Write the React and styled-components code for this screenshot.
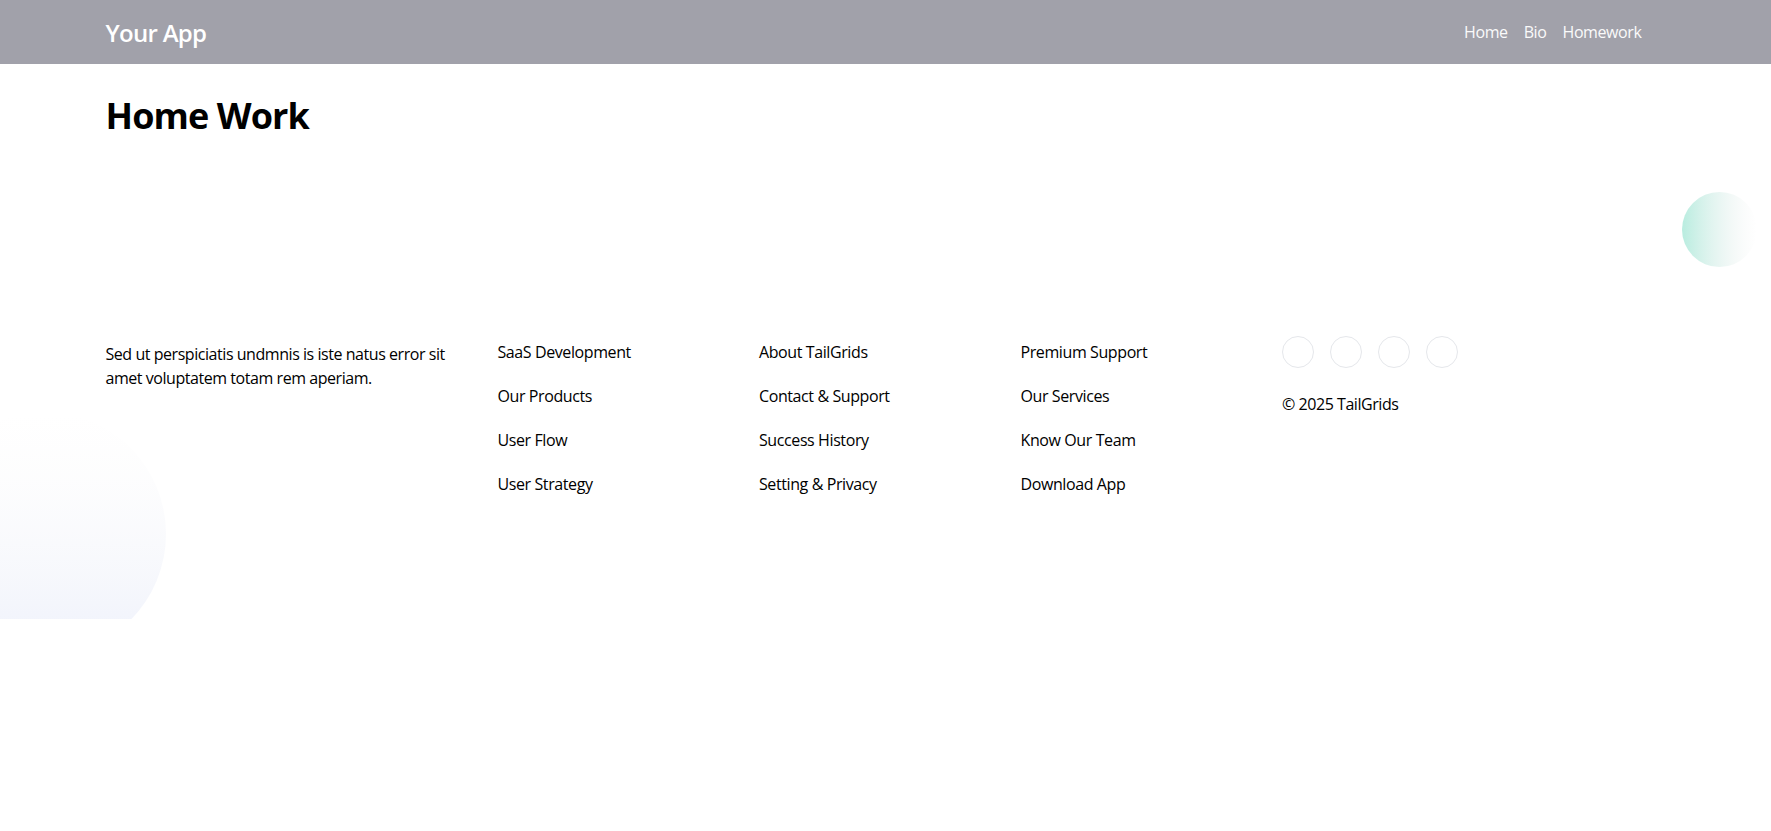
import React from "react";
import styled, { createGlobalStyle } from "styled-components";

const Global = createGlobalStyle`
  html, body { margin: 0; padding: 0; background: #ffffff; }
  body {
    font-family: "Open Sans", "Noto Sans", Arial, sans-serif;
    color: #000;
    font-size: 16px;
    line-height: 24px;
  }
  * { box-sizing: border-box; }
`;

const Header = styled.header`
  background: #a1a1aa;
  height: 64px;
`;

const HeaderInner = styled.div`
  width: 1560px;
  margin: 0 auto;
  height: 100%;
  display: flex;
  align-items: center;
  justify-content: space-between;
  padding-right: 24px;
`;

const Brand = styled.a`
  color: #fff;
  font-size: 24px;
  line-height: 32px;
  font-weight: 600;
  letter-spacing: -0.7px;
  text-decoration: none;
  margin-top: 2px;
`;

const Nav = styled.nav`
  display: flex;
  gap: 16px;
`;

const NavLink = styled.a`
  color: #fafafa;
  font-size: 16px;
  line-height: 24px;
  letter-spacing: -0.4px;
  text-decoration: none;
`;

const Main = styled.main`
  width: 1560px;
  margin: 0 auto;
  padding-top: 32px;
`;

const Title = styled.h1`
  margin: 0;
  font-size: 36px;
  line-height: 40px;
  font-weight: 700;
  letter-spacing: -0.9px;
`;

const Footer = styled.footer`
  position: relative;
  padding: 200px 0 123px;
`;

const Container = styled.div`
  width: 1560px;
  margin: 0 auto;
  display: grid;
  grid-template-columns: 392px 261.5px 261.5px 261.5px 1fr;
  align-items: start;
  position: relative;
  z-index: 1;
`;

const Desc = styled.p`
  margin: 6px 0 0;
  max-width: 360px;
  font-size: 16px;
  line-height: 24px;
  letter-spacing: -0.45px;
`;

const LinkList = styled.ul`
  list-style: none;
  margin: 4px 0 0;
  padding: 0;
  display: flex;
  flex-direction: column;
  gap: 20px;
`;

const FooterLink = styled.a`
  color: #000;
  text-decoration: none;
  font-size: 16px;
  line-height: 24px;
  letter-spacing: -0.4px;
`;

const Socials = styled.div`
  display: flex;
  gap: 16px;
  margin-bottom: 24px;
`;

const SocialCircle = styled.a`
  width: 32px;
  height: 32px;
  border-radius: 50%;
  border: 1px solid #e5e7eb;
  display: block;
`;

const Copy = styled.p`
  margin: 0;
  font-size: 16px;
  line-height: 24px;
  letter-spacing: -0.45px;
`;

const Deco = styled.span`
  position: absolute;
  pointer-events: none;
  z-index: 0;
  line-height: 0;
  ${(p) => p.$pos}
`;

const columns = [
  ["SaaS Development", "Our Products", "User Flow", "User Strategy"],
  ["About TailGrids", "Contact & Support", "Success History", "Setting & Privacy"],
  ["Premium Support", "Our Services", "Know Our Team", "Download App"],
];

export default function App() {
  return (
    <>
      <Global />
      <Header>
        <HeaderInner>
          <Brand href="#">Your App</Brand>
          <Nav>
            <NavLink href="#">Home</NavLink>
            <NavLink href="#">Bio</NavLink>
            <NavLink href="#">Homework</NavLink>
          </Nav>
        </HeaderInner>
      </Header>
      <Main>
        <Title>Home Work</Title>
      </Main>
      <Footer>
        <Container>
          <Desc>
            Sed ut perspiciatis undmnis is iste natus error sit amet voluptatem
            totam rem aperiam.
          </Desc>
          {columns.map((col, i) => (
            <LinkList key={i}>
              {col.map((t) => (
                <li key={t}>
                  <FooterLink href="#">{t}</FooterLink>
                </li>
              ))}
            </LinkList>
          ))}
          <div>
            <Socials>
              <SocialCircle href="#" />
              <SocialCircle href="#" />
              <SocialCircle href="#" />
              <SocialCircle href="#" />
            </Socials>
            <Copy>© 2025 TailGrids</Copy>
          </div>
        </Container>
        <Deco $pos="right: 14px; top: 56px;">
          <svg width="75" height="75" viewBox="0 0 75 75">
            <defs>
              <linearGradient id="tealGrad" x1="0" y1="37.5" x2="75" y2="37.5" gradientUnits="userSpaceOnUse">
                <stop offset="0" stopColor="#13C296" stopOpacity="0.3" />
                <stop offset="1" stopColor="#C4C4C4" stopOpacity="0" />
              </linearGradient>
            </defs>
            <circle cx="37.5" cy="37.5" r="37.5" fill="url(#tealGrad)" />
          </svg>
        </Deco>
        <Deco $pos="left: 0; bottom: 0;">
          <svg width="170" height="207" viewBox="0 0 170 207">
            <defs>
              <linearGradient id="blueGrad" x1="0" y1="244" x2="0" y2="0" gradientUnits="userSpaceOnUse">
                <stop offset="0" stopColor="#3056D3" stopOpacity="0.08" />
                <stop offset="1" stopColor="#C4C4C4" stopOpacity="0" />
              </linearGradient>
            </defs>
            <circle cx="44" cy="122" r="122" fill="url(#blueGrad)" />
          </svg>
        </Deco>
      </Footer>
    </>
  );
}
